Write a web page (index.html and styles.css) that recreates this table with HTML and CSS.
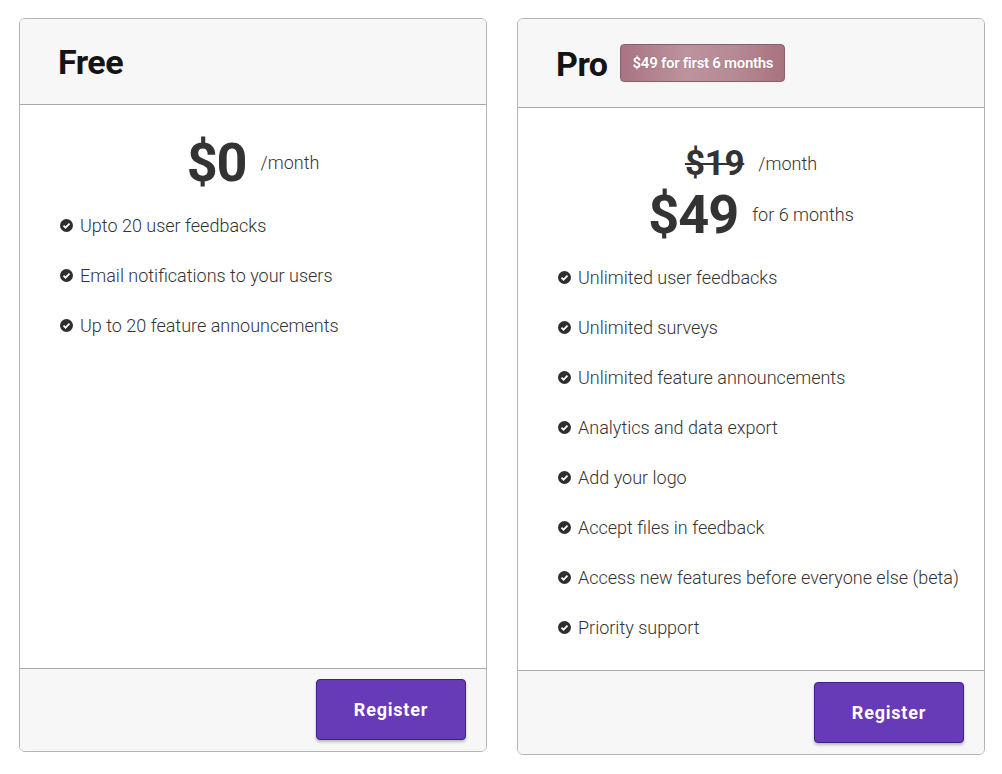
FILE: index.html
```html
<!DOCTYPE html>
<html lang="en">
<head>
<meta charset="utf-8">
<title>Pricing</title>
<link rel="stylesheet" href="styles.css">
</head>
<body>
<div class="pricing">
  <div class="card card-free">
    <div class="card-header">
      <h2 class="plan-name">Free</h2>
    </div>
    <div class="card-body">
      <div class="price-row price-main">
        <span class="amount">$0</span>
        <span class="per">/month</span>
      </div>
      <ul class="features">
        <li><svg class="check" viewBox="0 0 16 16"><circle cx="8" cy="8" r="8"/><path d="M4.3 8.2l2.5 2.5 4.9-4.9" /></svg>Upto 20 user feedbacks</li>
        <li><svg class="check" viewBox="0 0 16 16"><circle cx="8" cy="8" r="8"/><path d="M4.3 8.2l2.5 2.5 4.9-4.9" /></svg>Email notifications to your users</li>
        <li><svg class="check" viewBox="0 0 16 16"><circle cx="8" cy="8" r="8"/><path d="M4.3 8.2l2.5 2.5 4.9-4.9" /></svg>Up to 20 feature announcements</li>
      </ul>
    </div>
    <div class="card-footer">
      <button class="btn-register">Register</button>
    </div>
  </div>

  <div class="card card-pro">
    <div class="card-header">
      <h2 class="plan-name">Pro</h2>
      <span class="badge">$49 for first 6 months</span>
    </div>
    <div class="card-body">
      <div class="price-row price-old">
        <span class="amount-old">$19</span>
        <span class="per">/month</span>
      </div>
      <div class="price-row price-main">
        <span class="amount">$49</span>
        <span class="per">for 6 months</span>
      </div>
      <ul class="features">
        <li><svg class="check" viewBox="0 0 16 16"><circle cx="8" cy="8" r="8"/><path d="M4.3 8.2l2.5 2.5 4.9-4.9" /></svg>Unlimited user feedbacks</li>
        <li><svg class="check" viewBox="0 0 16 16"><circle cx="8" cy="8" r="8"/><path d="M4.3 8.2l2.5 2.5 4.9-4.9" /></svg>Unlimited surveys</li>
        <li><svg class="check" viewBox="0 0 16 16"><circle cx="8" cy="8" r="8"/><path d="M4.3 8.2l2.5 2.5 4.9-4.9" /></svg>Unlimited feature announcements</li>
        <li><svg class="check" viewBox="0 0 16 16"><circle cx="8" cy="8" r="8"/><path d="M4.3 8.2l2.5 2.5 4.9-4.9" /></svg>Analytics and data export</li>
        <li><svg class="check" viewBox="0 0 16 16"><circle cx="8" cy="8" r="8"/><path d="M4.3 8.2l2.5 2.5 4.9-4.9" /></svg>Add your logo</li>
        <li><svg class="check" viewBox="0 0 16 16"><circle cx="8" cy="8" r="8"/><path d="M4.3 8.2l2.5 2.5 4.9-4.9" /></svg>Accept files in feedback</li>
        <li><svg class="check" viewBox="0 0 16 16"><circle cx="8" cy="8" r="8"/><path d="M4.3 8.2l2.5 2.5 4.9-4.9" /></svg>Access new features before everyone else (beta)</li>
        <li><svg class="check" viewBox="0 0 16 16"><circle cx="8" cy="8" r="8"/><path d="M4.3 8.2l2.5 2.5 4.9-4.9" /></svg>Priority support</li>
      </ul>
    </div>
    <div class="card-footer">
      <button class="btn-register">Register</button>
    </div>
  </div>
</div>
</body>
</html>
```

FILE: styles.css
```css
* { box-sizing: border-box; }

html, body {
  margin: 0;
  padding: 0;
  background: #ffffff;
}

body {
  font-family: Roboto, "Liberation Sans", sans-serif;
  color: #333;
}

.pricing {
  display: flex;
  align-items: flex-start;
  gap: 30px;
  padding: 18px 0 0 19px;
}

.card {
  width: 468px;
  display: flex;
  flex-direction: column;
  border: 1px solid #b4b4b4;
  border-radius: 6px;
  background: #fff;
  overflow: hidden;
}

.card-free { height: 734px; }
.card-pro { height: 737px; }

.card-header {
  display: flex;
  align-items: center;
  gap: 12px;
  background: #f7f7f7;
  border-bottom: 1px solid #a9a9a9;
  padding: 0 38px;
}

.card-free .card-header { height: 86px; }
.card-pro .card-header { height: 89px; }

.plan-name {
  margin: 0;
  font-size: 34px;
  font-weight: 700;
  color: #141414;
  letter-spacing: -0.5px;
}

.card-pro .plan-name { margin-top: 2px; }

.badge {
  display: inline-block;
  height: 38px;
  line-height: 36px;
  padding: 0 11px 0 12px;
  border: 1px solid #8d5e6a;
  border-radius: 4px;
  background: linear-gradient(90deg, #a87481 0%, #bc939d 40%, #b58a94 70%, #a7737f 100%);
  color: #fff;
  font-size: 15px;
  font-weight: 700;
  letter-spacing: -0.3px;
  text-shadow: 0 0 1px rgba(90, 40, 55, 0.6);
}

.card-body {
  flex: 1;
  padding: 26px 0 0 40px;
}

.price-row {
  display: flex;
  align-items: center;
  justify-content: center;
  gap: 14px;
  padding-right: 40px;
}

.price-main { height: 62px; }

.price-old {
  height: 40px;
  margin-top: 9px;
}

.amount {
  font-size: 54px;
  font-weight: 700;
  color: #333;
  letter-spacing: -1px;
}

.amount-old {
  font-size: 35px;
  font-weight: 700;
  color: #333;
  text-decoration: line-through;
  text-decoration-thickness: 2px;
  letter-spacing: -0.3px;
}

.per {
  font-size: 18px;
  font-weight: 300;
  color: #333;
}

.features {
  list-style: none;
  margin: 7px 0 0;
  padding: 0;
}

.features li {
  display: flex;
  align-items: center;
  height: 50px;
  font-size: 18px;
  font-weight: 300;
  color: #333;
}

.check {
  width: 13px;
  height: 13px;
  margin-right: 7px;
  flex: none;
}

.check circle { fill: #2e2e2e; }
.check path {
  fill: none;
  stroke: #fff;
  stroke-width: 2.2;
}

.card-footer {
  display: flex;
  justify-content: flex-end;
  background: #f7f7f7;
  border-top: 1px solid #a9a9a9;
  padding: 10px 20px 11px 0;
}

.card-pro .card-footer { padding-top: 11px; }

.btn-register {
  width: 150px;
  height: 61px;
  border: 1px solid #3f1f8a;
  border-radius: 4px;
  background: #673ab7;
  color: #fff;
  font-family: Roboto, "Liberation Sans", sans-serif;
  font-size: 18px;
  font-weight: 700;
  letter-spacing: 0.8px;
  box-shadow: 0 2px 3px rgba(0, 0, 0, 0.25);
  cursor: pointer;
}
```
